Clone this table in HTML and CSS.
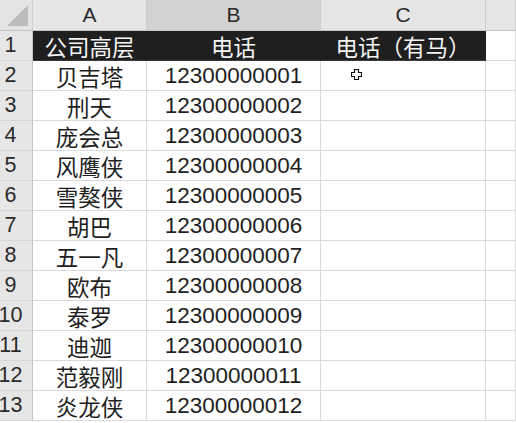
FILE: index.html
```html
<!DOCTYPE html>
<html lang="zh-CN">
<head>
<meta charset="utf-8">
<title>Sheet</title>
<link rel="stylesheet" href="styles.css">
</head>
<body>
<div class="sheet">
  <div class="corner"><span class="tri"></span></div>
  <div class="colhead">A</div>
  <div class="colhead sel">B</div>
  <div class="colhead">C</div>
  <div class="colhead"></div>

  <div class="rowhead">1</div>
  <div class="cell dark">公司高层</div>
  <div class="cell dark">电话</div>
  <div class="cell dark">电话（有马）</div>
  <div class="cell"></div>

  <div class="rowhead">2</div><div class="cell">贝吉塔</div><div class="cell">12300000001</div><div class="cell cur"><svg class="cursor" width="11" height="11" viewBox="0 0 11 11"><path d="M3.5 0.5h4v3h3v4h-3v3h-4v-3h-3v-4h3z" fill="#fff" stroke="#111" stroke-width="1.2"/></svg></div><div class="cell"></div>
  <div class="rowhead">3</div><div class="cell">刑天</div><div class="cell">12300000002</div><div class="cell"></div><div class="cell"></div>
  <div class="rowhead">4</div><div class="cell">庞会总</div><div class="cell">12300000003</div><div class="cell"></div><div class="cell"></div>
  <div class="rowhead">5</div><div class="cell">风鹰侠</div><div class="cell">12300000004</div><div class="cell"></div><div class="cell"></div>
  <div class="rowhead">6</div><div class="cell">雪獒侠</div><div class="cell">12300000005</div><div class="cell"></div><div class="cell"></div>
  <div class="rowhead">7</div><div class="cell">胡巴</div><div class="cell">12300000006</div><div class="cell"></div><div class="cell"></div>
  <div class="rowhead">8</div><div class="cell">五一凡</div><div class="cell">12300000007</div><div class="cell"></div><div class="cell"></div>
  <div class="rowhead">9</div><div class="cell">欧布</div><div class="cell">12300000008</div><div class="cell"></div><div class="cell"></div>
  <div class="rowhead">10</div><div class="cell">泰罗</div><div class="cell">12300000009</div><div class="cell"></div><div class="cell"></div>
  <div class="rowhead">11</div><div class="cell">迪迦</div><div class="cell">12300000010</div><div class="cell"></div><div class="cell"></div>
  <div class="rowhead">12</div><div class="cell">范毅刚</div><div class="cell">12300000011</div><div class="cell"></div><div class="cell"></div>
  <div class="rowhead">13</div><div class="cell">炎龙侠</div><div class="cell">12300000012</div><div class="cell"></div><div class="cell"></div>
</div>
</body>
</html>
```
FILE: styles.css
```css
html, body {
  margin: 0;
  padding: 0;
  background: #ffffff;
  overflow: hidden;
}
.sheet {
  display: grid;
  grid-template-columns: 33px 114px 174px 165px 30px;
  grid-template-rows: 31px repeat(13, 30px);
  height: 423px;
  align-content: start;
  font-family: "Liberation Sans", "Noto Sans CJK SC", sans-serif;
  font-size: 22.5px;
  color: #1e1e1e;
}
.corner {
  background: #e4e4e4;
  border-right: 1px solid #cfcfcf;
  border-bottom: 1px solid #c4c4c4;
  position: relative;
}
.tri {
  position: absolute;
  right: 4px;
  bottom: 4px;
  width: 0;
  height: 0;
  border-left: 21px solid transparent;
  border-bottom: 21px solid #bcbcbc;
}
.colhead {
  background: #e6e6e6;
  border-right: 1px solid #cdcdcd;
  border-bottom: 1px solid #c4c4c4;
  display: flex;
  align-items: center;
  justify-content: center;
  font-size: 21px;
  color: #2a2a2a;
}
.colhead.sel {
  background: #d2d2d2;
}
.rowhead {
  background: #e6e6e6;
  border-right: 1px solid #c4c4c4;
  border-bottom: 1px solid #d6d6d6;
  display: flex;
  align-items: center;
  justify-content: center;
  padding-right: 11px;
  font-size: 21.5px;
  color: #2a2a2a;
}
.cell {
  border-right: 1px solid #dadada;
  border-bottom: 1px solid #dadada;
  display: flex;
  align-items: center;
  justify-content: center;
  white-space: nowrap;
  overflow: hidden;
}
.cell.dark {
  background: #1f1f1f;
  color: #f4f4f4;
  border-right-color: #1f1f1f;
  border-bottom-color: #3a3a3a;
}
.cell.cur {
  position: relative;
}
.cursor {
  position: absolute;
  left: 30px;
  top: 8px;
}
```
